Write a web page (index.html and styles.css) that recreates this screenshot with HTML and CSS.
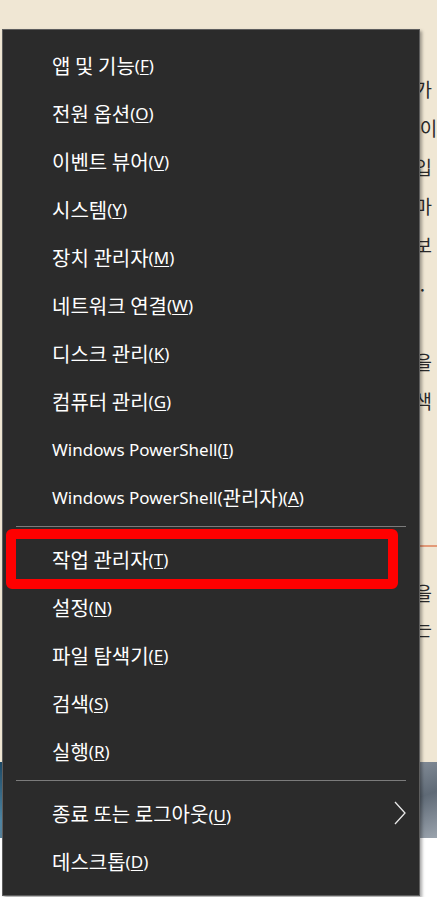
FILE: index.html
```html
<!DOCTYPE html>
<html lang="ko">

<head>
    <meta charset="UTF-8">
    <meta name="viewport" content="width=device-width, initial-scale=1.0">
    <title>빠른 링크 메뉴</title>

    <link rel="stylesheet" href="styles.css">
</head>

<body>
    <div class="desktop">
        <div class="window-edge"></div>
        <div class="page">
            <div class="article">
                <div class="line">하가</div>
                <div class="line">서 이</div>
                <div class="line">다입</div>
                <div class="line">나마</div>
                <div class="line">해보</div>
                <div class="line">다 .</div>
                <div class="line"></div>
                <div class="line">들을</div>
                <div class="line">검색</div>
            </div>
            <div class="rule"></div>
            <div class="article lower">
                <div class="line">업을</div>
                <div class="line">하는</div>
            </div>
            <div class="photo"></div>
            <div class="footer">
                <div class="line">시</div>
            </div>
        </div>
    </div>

    <div class="menu">
        <div class="menu-item"><span class="ko">앱 및 기능</span>(<u>F</u>)</div>
        <div class="menu-item"><span class="ko">전원 옵션</span>(<u>O</u>)</div>
        <div class="menu-item"><span class="ko">이벤트 뷰어</span>(<u>V</u>)</div>
        <div class="menu-item"><span class="ko">시스템</span>(<u>Y</u>)</div>
        <div class="menu-item"><span class="ko">장치 관리자</span>(<u>M</u>)</div>
        <div class="menu-item"><span class="ko">네트워크 연결</span>(<u>W</u>)</div>
        <div class="menu-item"><span class="ko">디스크 관리</span>(<u>K</u>)</div>
        <div class="menu-item"><span class="ko">컴퓨터 관리</span>(<u>G</u>)</div>
        <div class="menu-item">Windows PowerShell(<u>I</u>)</div>
        <div class="menu-item">Windows PowerShell(<span class="ko">관리자</span>)(<u>A</u>)</div>
        <div class="separator"></div>
        <div class="menu-item marked"><span class="ko">작업 관리자</span>(<u>T</u>)</div>
        <div class="menu-item"><span class="ko">설정</span>(<u>N</u>)</div>
        <div class="menu-item"><span class="ko">파일 탐색기</span>(<u>E</u>)</div>
        <div class="menu-item"><span class="ko">검색</span>(<u>S</u>)</div>
        <div class="menu-item"><span class="ko">실행</span>(<u>R</u>)</div>
        <div class="separator"></div>
        <div class="menu-item">
            <span><span class="ko">종료 또는 로그아웃</span>(<u>U</u>)</span>
            <svg class="chevron" width="12" height="24" viewBox="0 0 12 24">
                <polyline points="1,1 11,12 1,23" fill="none" stroke="#e8e8e8" stroke-width="1.3" />
            </svg>
        </div>
        <div class="menu-item"><span class="ko">데스크톱</span>(<u>D</u>)</div>
    </div>
</body>

</html>
```

FILE: styles.css
```css
body {
    margin: 0;
    padding: 0;
    font-family: "Noto Sans", "Noto Sans CJK KR", sans-serif;
    overflow: hidden;
}

.desktop {
    display: flex;
    height: 897px;
}

.window-edge {
    width: 11px;
    background: linear-gradient(to right, #2f8fd6, #4aa6e2);
}

.page {
    flex: 1;
    display: flex;
    flex-direction: column;
    background-color: #f0e7d4;
    font-family: "Noto Sans CJK KR", sans-serif;
    color: #2a2a2a;
    font-size: 19px;
}

.article {
    padding-top: 69px;
}

.article.lower {
    padding-top: 28px;
}

.line {
    height: 39px;
    line-height: 39px;
    padding-left: 397px;
    white-space: nowrap;
}

.lower .line {
    height: 35px;
    line-height: 35px;
}

.rule {
    margin-top: 125px;
    margin-left: 400px;
    height: 2px;
    background-color: #e39a78;
}

.photo {
    margin-top: 117px;
    height: 76px;
    background: linear-gradient(160deg, #1d4a66 0%, #4f86a4 25%, #6b7d8c 45%, #8c95a0 60%, #5f6a76 80%, #9aa3ad 100%);
}

.footer {
    flex: 1;
    background-color: #ffffff;
}

.footer .line {
    padding-top: 12px;
    padding-left: 404px;
}

.menu {
    position: absolute;
    left: 2px;
    top: 29px;
    width: 416px;
    height: 854px;
    padding: 11px 0 0 0;
    background-color: #2b2b2b;
    border: 1px solid #5e5e5e;
    box-shadow: 2px 2px 3px rgba(0, 0, 0, 0.35);
    color: #ffffff;
    font-size: 17px;
}

.menu-item {
    position: relative;
    display: flex;
    align-items: center;
    height: 48px;
    padding-left: 49px;
    padding-right: 13px;
    white-space: nowrap;
}

.ko {
    font-family: "Noto Sans CJK KR", sans-serif;
    font-size: 20px;
    word-spacing: -1px;
}

.menu-item u {
    text-underline-offset: 2px;
}

.menu-item.marked::before {
    content: "";
    position: absolute;
    left: 3px;
    right: 21px;
    top: -6px;
    bottom: -6px;
    border: 10px solid #ff0000;
    border-radius: 6px;
}

.chevron {
    margin-left: auto;
}

.separator {
    height: 1px;
    margin: 5px 13px 8px;
    background-color: #7b7b7b;
}
```
